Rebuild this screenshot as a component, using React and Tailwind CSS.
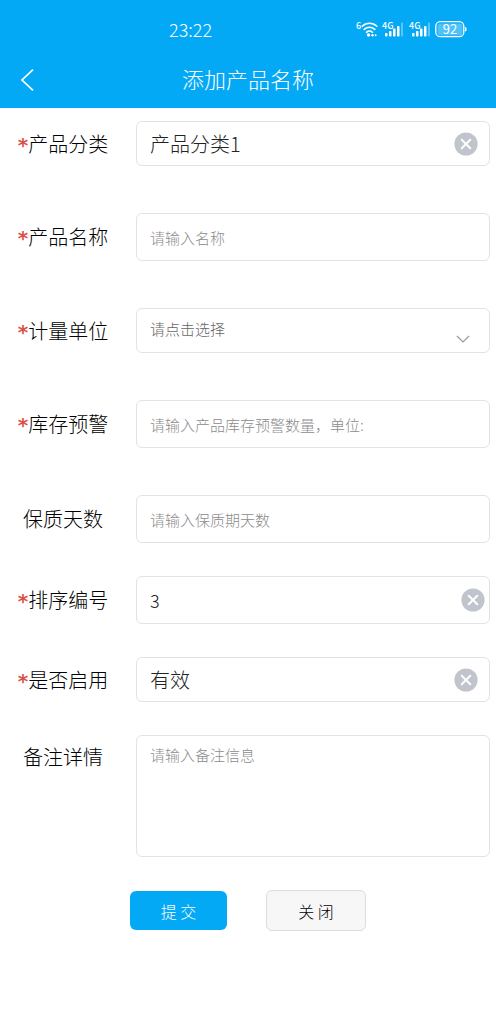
import { useState } from "react";

export default function App() {
  const [category, setCategory] = useState("产品分类1");
  const [sort, setSort] = useState("3");
  const [status, setStatus] = useState("有效");

  return (
    <div className="min-h-screen bg-white font-['Noto_Sans_CJK_SC',sans-serif] font-light text-black">
      <header className="bg-[#04a9f6] text-white">
        <StatusBar />
        <TitleBar title="添加产品名称" />
      </header>

      <form
        className="flex flex-col gap-[33px] pt-[13px] pr-[6px] pb-8"
        onSubmit={(e) => e.preventDefault()}
      >
        <Field id="category" label="产品分类" required spaced>
          <div className="flex h-[45px] items-center rounded-md border border-[#e2e3e5] pr-[11px] pl-[13px]">
            <input
              id="category"
              className="min-w-0 flex-1 text-xl text-[#222] outline-none"
              value={category}
              onChange={(e) => setCategory(e.target.value)}
            />
            <ClearButton onClick={() => setCategory("")} />
          </div>
        </Field>

        <Field id="name" label="产品名称" required spaced>
          <TextBox id="name" placeholder="请输入名称" />
        </Field>

        <Field id="unit" label="计量单位" required spaced>
          <div className="grid h-[45px] rounded-md border border-[#e2e3e5]">
            <select
              id="unit"
              className="col-start-1 row-start-1 appearance-none pb-0.5 pl-[13px] text-[15px] text-[#666] outline-none"
            >
              <option value="">请点击选择</option>
              <option value="jian">件</option>
              <option value="xiang">箱</option>
            </select>
            <svg
              viewBox="0 0 14 8"
              className="pointer-events-none col-start-1 row-start-1 mr-[19px] mb-[9px] h-2 w-3.5 self-end justify-self-end"
              fill="none"
              stroke="#9a9a9a"
              strokeWidth="1.2"
            >
              <path d="M1 1l6 6 6-6" />
            </svg>
          </div>
        </Field>

        <Field id="stock" label="库存预警" required spaced>
          <TextBox id="stock" placeholder="请输入产品库存预警数量，单位:" />
        </Field>

        <Field id="days" label="保质天数">
          <TextBox id="days" placeholder="请输入保质期天数" />
        </Field>

        <Field id="sort" label="排序编号" required>
          <div className="flex h-12 items-center rounded-md border border-[#e2e3e5] pr-1 pl-[13px]">
            <input
              id="sort"
              className="min-w-0 flex-1 text-lg text-[#222] outline-none"
              value={sort}
              onChange={(e) => setSort(e.target.value)}
            />
            <ClearButton onClick={() => setSort("")} />
          </div>
        </Field>

        <Field id="status" label="是否启用" required>
          <div className="flex h-[45px] items-center rounded-md border border-[#e2e3e5] pr-[11px] pl-[13px]">
            <input
              id="status"
              className="min-w-0 flex-1 text-xl text-[#222] outline-none"
              value={status}
              onChange={(e) => setStatus(e.target.value)}
            />
            <ClearButton onClick={() => setStatus("")} />
          </div>
        </Field>

        <div className="flex items-start">
          <label
            htmlFor="remark"
            className="w-[126px] shrink-0 pt-2 text-center text-xl"
          >
            备注详情
          </label>
          <textarea
            id="remark"
            placeholder="请输入备注信息"
            className="ml-[10px] h-[122px] min-w-0 flex-1 resize-none rounded-md border border-[#e2e3e5] px-[13px] py-2 text-[15px] outline-none placeholder:text-[#8c8c8c]"
          />
        </div>

        <div className="flex items-center justify-center gap-[39px] pl-[6px]">
          <button
            type="submit"
            className="h-[39px] w-[97px] rounded-md bg-[#04a9f6] text-base text-white"
          >
            提 交
          </button>
          <button
            type="button"
            className="h-[41px] w-[100px] rounded-md border border-[#dcdcdc] bg-[#f7f7f7] text-base"
          >
            关 闭
          </button>
        </div>
      </form>
    </div>
  );
}

function Field({ id, label, required = false, spaced = false, children }) {
  return (
    <div className={spaced ? "flex items-center pb-[14px]" : "flex items-center"}>
      <label
        htmlFor={id}
        className="w-[126px] shrink-0 text-center text-xl leading-7"
      >
        {required && (
          <span className="font-['DejaVu_Sans',sans-serif] leading-none font-bold text-[#d9534a]">
            *
          </span>
        )}
        {label}
      </label>
      <div className="ml-[10px] min-w-0 flex-1">{children}</div>
    </div>
  );
}

function TextBox({ id, placeholder }) {
  return (
    <input
      id={id}
      placeholder={placeholder}
      className="block h-12 w-full rounded-md border border-[#e2e3e5] px-[13px] text-[15px] outline-none placeholder:text-[#8c8c8c]"
    />
  );
}

function ClearButton({ onClick }) {
  return (
    <button type="button" aria-label="清除" className="shrink-0" onClick={onClick}>
      <svg viewBox="0 0 24 24" className="size-6">
        <circle cx="12" cy="12" r="11.6" fill="#c0c4cc" />
        <path
          d="M7.7 7.7l8.6 8.6M16.3 7.7l-8.6 8.6"
          stroke="#fff"
          strokeWidth="2"
          strokeLinecap="round"
        />
      </svg>
    </button>
  );
}

function TitleBar({ title }) {
  return (
    <div className="grid h-14 grid-cols-[56px_1fr_56px] items-center">
      <button type="button" aria-label="返回" className="pl-5">
        <svg
          viewBox="0 0 14 22"
          className="h-[22px] w-3.5"
          fill="none"
          stroke="currentColor"
          strokeWidth="1.7"
        >
          <path d="M13 0.7L2 11l11 10.3" />
        </svg>
      </button>
      <h1 className="pb-1 text-center text-[22px]">{title}</h1>
    </div>
  );
}

function StatusBar() {
  return (
    <div className="flex h-[52px] items-center justify-between pt-1.5 pr-7 pl-[169px]">
      <span className="text-lg">23:22</span>
      <div className="flex items-center">
        <Wifi />
        <Signal />
        <Signal />
        <Battery level={92} />
      </div>
    </div>
  );
}

function Wifi() {
  return (
    <svg viewBox="0 0 27 20" className="h-5 w-[27px]" fill="none" stroke="#fff">
      <text x="2" y="10" fontSize="9" fontWeight="500" fill="#fff" stroke="none">
        6
      </text>
      <g strokeWidth="1.6" strokeLinecap="round">
        <path d="M8.2 7.3c4.1-4 10.5-4 14.6 0" />
        <path d="M10.2 10.4c3-2.9 7.6-2.9 10.6 0" />
        <path d="M12.5 13.3c1.700-1.600 4.300-1.600 6 0" />
      </g>
      <circle cx="14.5" cy="16" r="1.7" fill="#fff" stroke="none" />
      <circle cx="18.5" cy="16.2" r="1.2" fill="#fff" stroke="none" />
      <circle cx="21.6" cy="16.2" r="1" fill="#fff" stroke="none" />
    </svg>
  );
}

function Signal() {
  return (
    <svg viewBox="0 0 27 20" className="h-5 w-[27px]" fill="#fff">
      <text x="1" y="10" fontSize="9" fontWeight="500">
        4G
      </text>
      <rect x="4" y="14" width="2.5" height="3.5" rx="0.8" />
      <rect x="8" y="12" width="2.5" height="5.5" rx="0.8" />
      <rect x="12" y="9.5" width="2.5" height="8" rx="0.8" />
      <rect x="16" y="7" width="2.5" height="10.5" rx="0.8" />
      <rect x="20" y="3.5" width="2" height="14" rx="0.8" opacity="0.35" />
    </svg>
  );
}

function Battery({ level }) {
  return (
    <svg viewBox="0 0 33 20" className="h-5 w-[33px]" fill="none">
      <rect x="2.5" y="4.5" width="25" height="12" rx="3" fill="#fff" opacity="0.3" />
      <rect x="0.8" y="2.7" width="28" height="15" rx="4.5" stroke="#fff" strokeWidth="1.3" />
      <path d="M30 8v4.5c2.2-0.5 2.2-4 0-4.5z" fill="#fff" />
      <text x="15" y="15" textAnchor="middle" fontSize="13" fontWeight="400" fill="#fff">
        {level}
      </text>
    </svg>
  );
}
